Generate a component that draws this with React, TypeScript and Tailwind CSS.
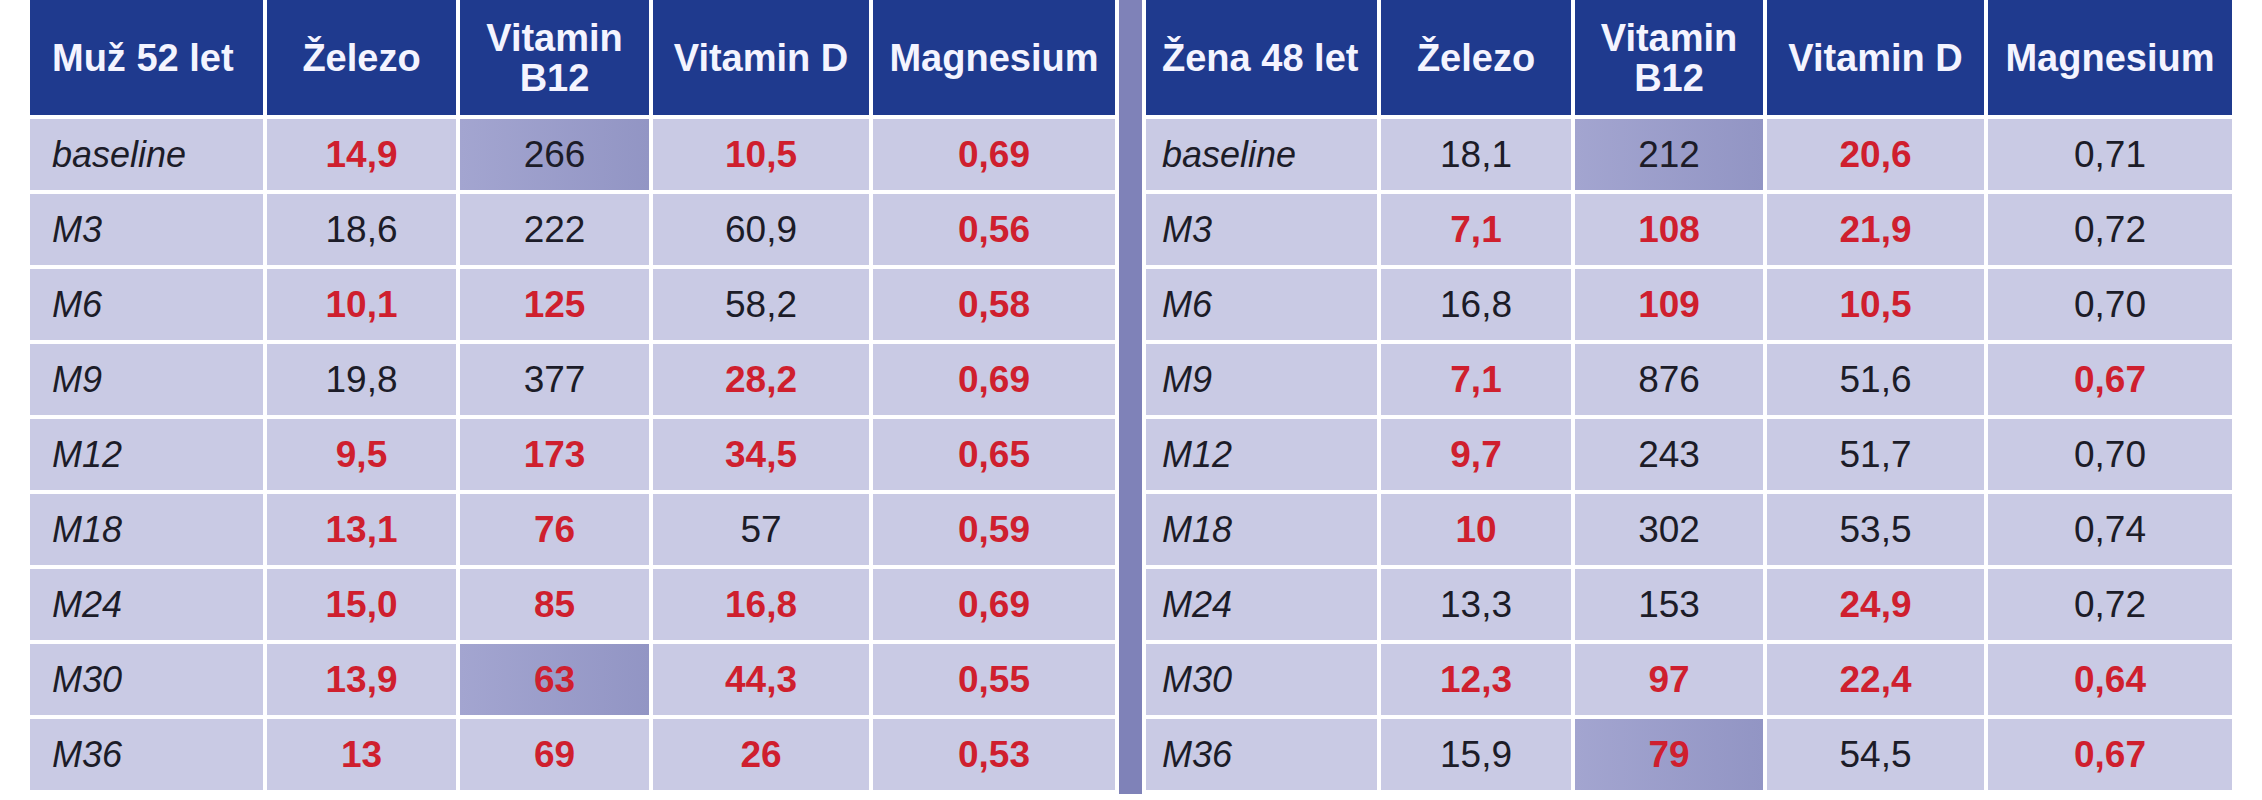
import React from 'react';

type Cell = { v: string; red?: boolean; hl?: boolean };

const r = (v: string): Cell => ({ v, red: true });
const n = (v: string): Cell => ({ v });

const menRows: { label: string; cells: Cell[] }[] = [
  { label: 'baseline', cells: [r('14,9'), { v: '266', hl: true }, r('10,5'), r('0,69')] },
  { label: 'M3', cells: [n('18,6'), n('222'), n('60,9'), r('0,56')] },
  { label: 'M6', cells: [r('10,1'), r('125'), n('58,2'), r('0,58')] },
  { label: 'M9', cells: [n('19,8'), n('377'), r('28,2'), r('0,69')] },
  { label: 'M12', cells: [r('9,5'), r('173'), r('34,5'), r('0,65')] },
  { label: 'M18', cells: [r('13,1'), r('76'), n('57'), r('0,59')] },
  { label: 'M24', cells: [r('15,0'), r('85'), r('16,8'), r('0,69')] },
  { label: 'M30', cells: [r('13,9'), { v: '63', red: true, hl: true }, r('44,3'), r('0,55')] },
  { label: 'M36', cells: [r('13'), r('69'), r('26'), r('0,53')] },
];

const womenRows: { label: string; cells: Cell[] }[] = [
  { label: 'baseline', cells: [n('18,1'), { v: '212', hl: true }, r('20,6'), n('0,71')] },
  { label: 'M3', cells: [r('7,1'), r('108'), r('21,9'), n('0,72')] },
  { label: 'M6', cells: [n('16,8'), r('109'), r('10,5'), n('0,70')] },
  { label: 'M9', cells: [r('7,1'), n('876'), n('51,6'), r('0,67')] },
  { label: 'M12', cells: [r('9,7'), n('243'), n('51,7'), n('0,70')] },
  { label: 'M18', cells: [r('10'), n('302'), n('53,5'), n('0,74')] },
  { label: 'M24', cells: [n('13,3'), n('153'), r('24,9'), n('0,72')] },
  { label: 'M30', cells: [r('12,3'), r('97'), r('22,4'), r('0,64')] },
  { label: 'M36', cells: [n('15,9'), { v: '79', red: true, hl: true }, n('54,5'), r('0,67')] },
];

const headCls =
  'flex items-center justify-center bg-[#1f3a8e] text-center text-[38px] font-bold leading-[40px] text-[#f4f4ff]';

function Table({
  title,
  rows,
  cols,
  pad,
}: {
  title: string;
  rows: { label: string; cells: Cell[] }[];
  cols: string;
  pad: string;
}) {
  return (
    <div className={`grid ${cols} grid-rows-[115px_repeat(9,71px)] gap-[4px]`}>
      <div className={`${headCls} !justify-start ${pad}`}>{title}</div>
      <div className={headCls}>Železo</div>
      <div className={headCls}>
        Vitamin
        <br />
        B12
      </div>
      <div className={headCls}>Vitamin D</div>
      <div className={headCls}>Magnesium</div>
      {rows.map((row) => (
        <React.Fragment key={row.label}>
          <div className={`flex items-center bg-[#c9cae4] ${pad} text-[36px] italic text-[#1c1c28]`}>{row.label}</div>
          {row.cells.map((c, i) => (
            <div
              key={i}
              className={`flex items-center justify-center text-[37px] ${
                c.hl ? 'bg-gradient-to-r from-[#a3a5d0] to-[#9295c4]' : 'bg-[#c9cae4]'
              } ${c.red ? 'font-bold text-[#cf1f2e]' : 'text-[#1c1c28]'}`}
            >
              {c.v}
            </div>
          ))}
        </React.Fragment>
      ))}
    </div>
  );
}

export default function App() {
  return (
    <div className="flex h-[800px] w-[2262px] items-start gap-[4px] bg-white pl-[30px] font-['Liberation_Sans',Arial,sans-serif]">
      <Table
        title="Muž 52 let"
        rows={menRows}
        cols="grid-cols-[233px_189px_189px_216px_242px]"
        pad="pl-[22px]"
      />
      <div className="h-[794px] w-[23px] bg-[#7f82b8]" />
      <Table
        title="Žena 48 let"
        rows={womenRows}
        cols="grid-cols-[231px_190px_188px_217px_244px]"
        pad="pl-[16px]"
      />
    </div>
  );
}
